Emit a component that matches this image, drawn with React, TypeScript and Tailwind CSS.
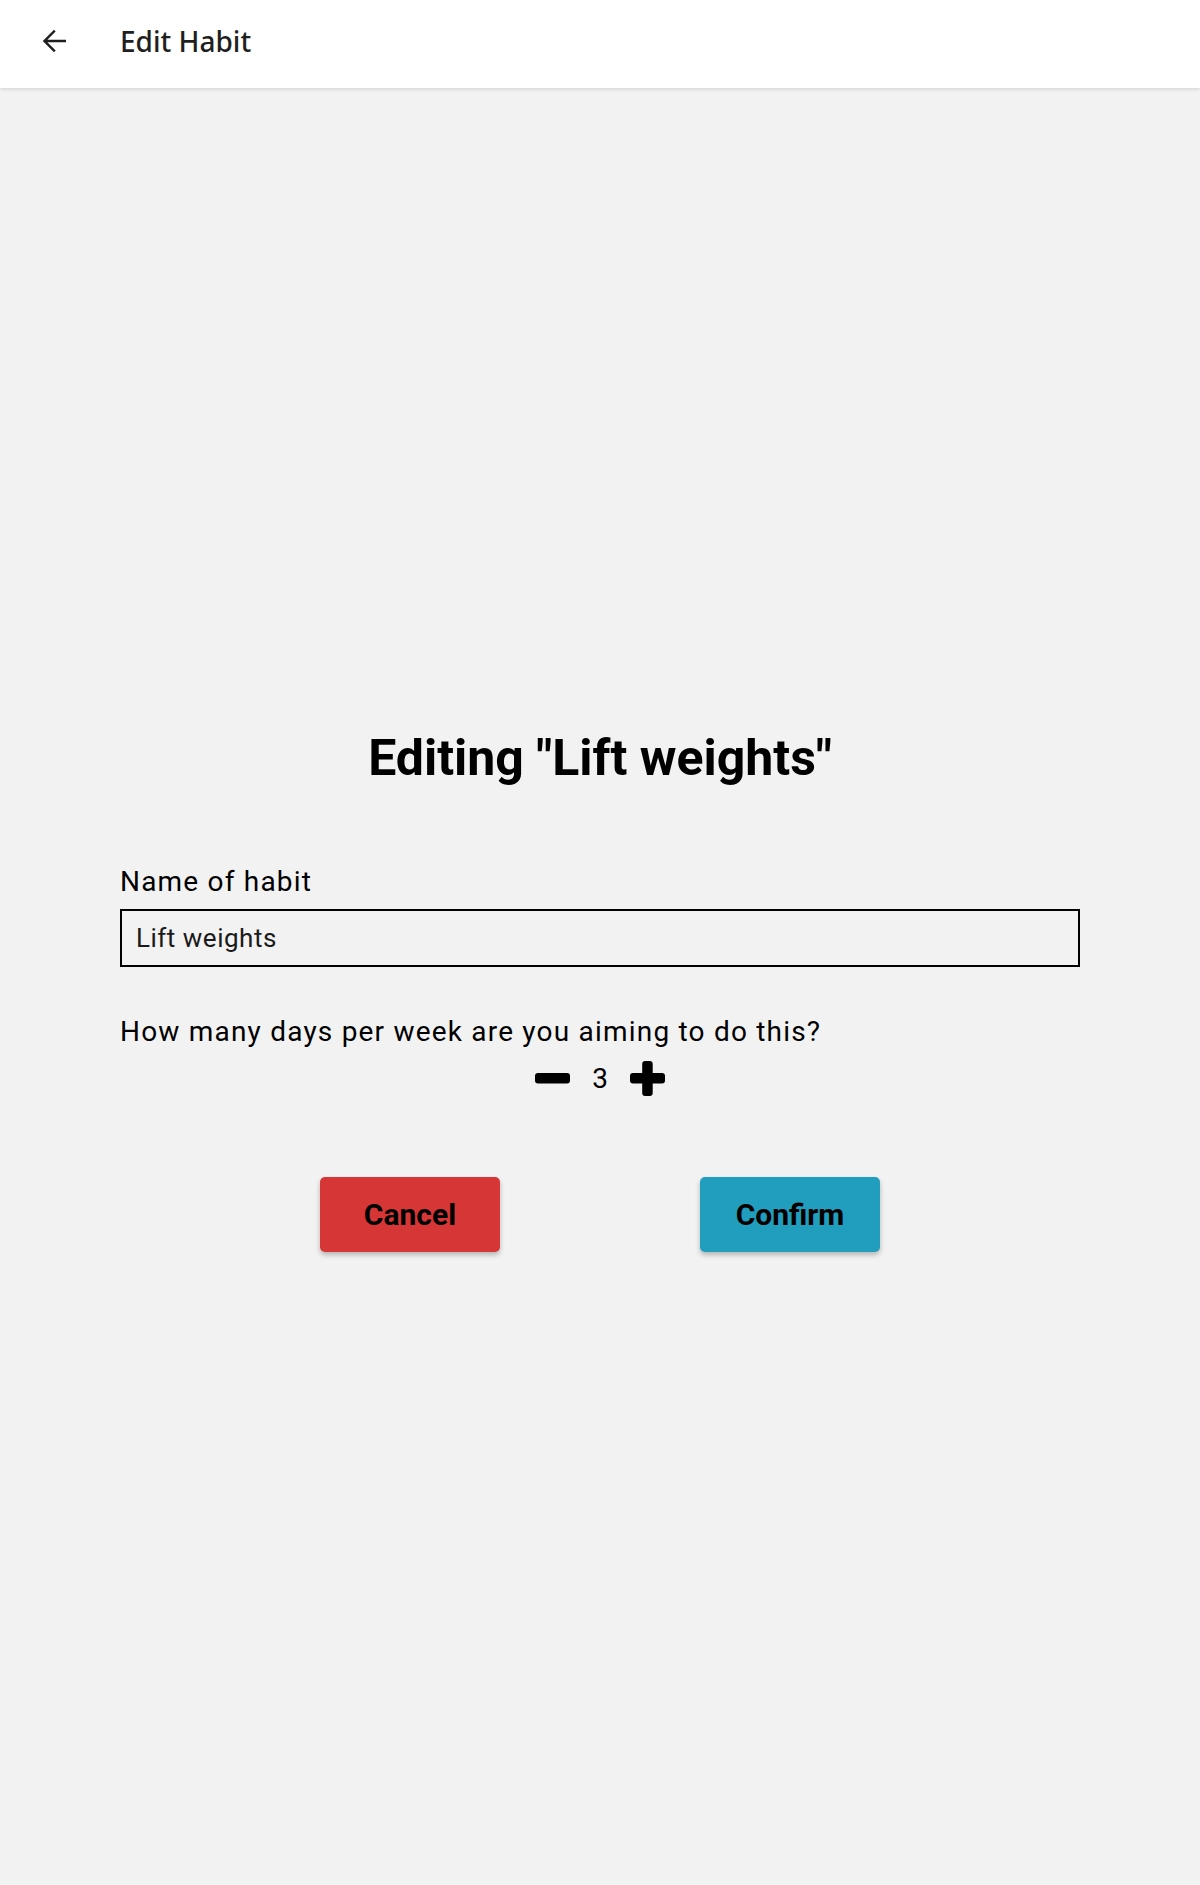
import React, { useState } from "react";

export default function App() {
  const [name, setName] = useState("Lift weights");
  const [days, setDays] = useState(3);
  return (
    <div
      className="min-h-[1885px] w-[1200px] bg-[#f2f2f2] flex flex-col"
      style={{ fontFamily: "Roboto, 'Noto Sans', sans-serif" }}
    >
      <header className="h-[88px] bg-white shadow-[0_1px_4px_rgba(0,0,0,0.14)] relative z-10">
        <div className="h-[82px] flex items-center pl-[36px]">
          <svg width="36" height="36" viewBox="0 0 24 24" className="text-[#1f1f1f]">
            <path
              fill="currentColor"
              d="M20 11.1H7.6l5.5-5.5L12 4.5 4.5 12l7.5 7.5 1.1-1.1-5.5-5.5H20z"
            />
          </svg>
          <h1
            className="ml-[48px] text-[28px] leading-[32px] font-medium text-[#1f1f1f]"
            style={{ fontFamily: "'Noto Sans', sans-serif" }}
          >
            Edit Habit
          </h1>
        </div>
      </header>

      <main className="flex flex-col pt-[640px]">
        <h2 className="text-center text-[50px] leading-[60px] font-bold text-black">
          Editing "{name}"
        </h2>

        <div className="mt-[78px] px-[120px]">
          <label className="block text-[28px] leading-[32px] tracking-[1.2px] text-black">Name of habit</label>
          <input
            value={name}
            onChange={(e) => setName(e.target.value)}
            className="mt-[11px] block w-full h-[58px] border-2 border-black bg-transparent px-[14px] text-[26px] tracking-[0.5px] text-[#1a1a1a] outline-none"
            style={{ fontFamily: "Roboto, sans-serif" }}
          />

          <p className="mt-[49px] text-[28px] leading-[32px] tracking-[1.2px] text-black">
            How many days per week are you aiming to do this?
          </p>
          <div className="mt-[12px] h-[36px] flex items-center justify-center gap-[22px]">
            <button onClick={() => setDays(Math.max(0, days - 1))} className="w-[35px] h-[36px] flex items-center justify-center">
              <svg width="35" height="11" viewBox="0 0 35 11">
                <rect x="0" y="0" width="35" height="10.5" rx="3" fill="#000" />
              </svg>
            </button>
            <span className="text-[28px] leading-[32px] text-black pt-[2px]">{days}</span>
            <button onClick={() => setDays(Math.min(7, days + 1))} className="w-[35px] h-[36px] flex items-center justify-center">
              <svg width="35" height="35" viewBox="0 0 35 35">
                <rect x="0" y="12" width="35" height="10.5" rx="3" fill="#000" />
                <rect x="12.2" y="0" width="10.5" height="35" rx="3" fill="#000" />
              </svg>
            </button>
          </div>

          <div className="mt-[81px] flex justify-center gap-[200px]">
            <button className="w-[180px] h-[75px] rounded-[5px] bg-[#d63636] text-black text-[30px] font-bold shadow-[0_3px_5px_rgba(0,0,0,0.25)]">
              Cancel
            </button>
            <button className="w-[180px] h-[75px] rounded-[5px] bg-[#219dbd] text-black text-[30px] font-bold shadow-[0_3px_5px_rgba(0,0,0,0.25)]">
              Confirm
            </button>
          </div>
        </div>
      </main>
    </div>
  );
}
